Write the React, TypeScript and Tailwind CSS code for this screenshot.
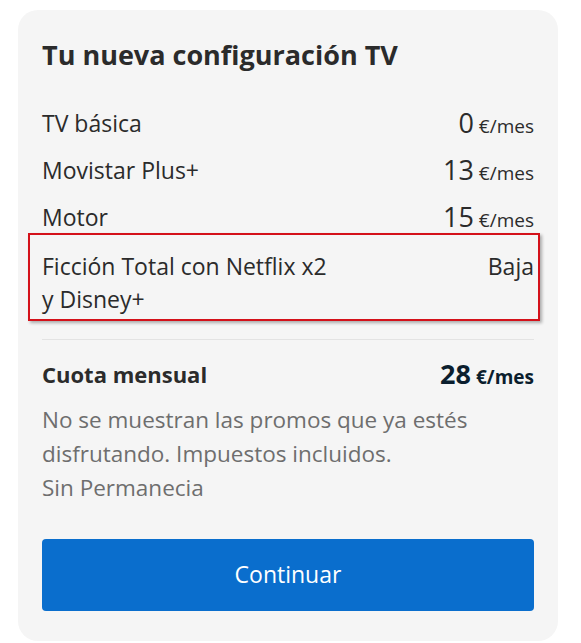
import React from 'react';

interface LineItem {
  name: React.ReactNode;
  price?: number;
  status?: string;
  highlight?: boolean;
}

const items: LineItem[] = [
  { name: 'TV básica', price: 0 },
  { name: 'Movistar Plus+', price: 13 },
  { name: 'Motor', price: 15 },
  {
    name: (
      <>
        Ficción Total con Netflix x2
        <br />y Disney+
      </>
    ),
    status: 'Baja',
    highlight: true,
  },
];

function Price({ value, bold }: { value: number; bold?: boolean }) {
  return (
    <span className={`whitespace-nowrap ${bold ? 'font-bold text-[#0b1e2e]' : 'text-[#2b2b2b]'}`}>
      <span className="text-[27px]">{value}</span>
      <span className="ml-[5px] text-[19px]">€/mes</span>
    </span>
  );
}

export default function App() {
  return (
    <div className="min-h-[643px] bg-white pl-[18px] pt-[10px] font-['Open_Sans',sans-serif]">
      <div className="w-[540px] rounded-[20px] bg-[#f5f5f5] px-[24px] pb-[30px] pt-[28px]">
        <h2 className="text-[27px] font-bold leading-[34px] text-[#2b2b2b]">
          Tu nueva configuración TV
        </h2>

        <div className="mt-[28px] flex flex-col">
          {items.map((item, i) => (
            <div
              key={i}
              className={
                item.highlight
                  ? 'ml-[-14px] mr-[-6px] mt-[-8px] flex items-start justify-between border-2 border-[#d4111a] pb-[3px] pl-[12px] pr-[4px] pt-[15px] shadow-[2px_2px_3px_rgba(0,0,0,0.3)]'
                  : 'flex h-[47px] items-center justify-between'
              }
            >
              <span className="text-[23px] leading-[33px] text-[#2b2b2b]">{item.name}</span>
              {item.price !== undefined ? (
                <Price value={item.price} />
              ) : (
                <span className="text-[23px] leading-[33px] text-[#2b2b2b]">{item.status}</span>
              )}
            </div>
          ))}
        </div>

        <div className="mt-[18px] border-t border-[#e3e3e3]" />

        <div className="mt-[14px] flex items-center justify-between">
          <span className="text-[22px] font-bold text-[#2b2b2b]">Cuota mensual</span>
          <Price value={28} bold />
        </div>

        <p className="mt-[8px] text-[22.5px] leading-[34px] text-[#6e6e6e]">
          No se muestran las promos que ya estés
          <br />
          disfrutando. Impuestos incluidos.
          <br />
          Sin Permanecia
        </p>

        <button className="mt-[34px] flex h-[72px] w-full items-center justify-center rounded-[4px] bg-[#0a6ecd] text-[23px] text-white">
          Continuar
        </button>
      </div>
    </div>
  );
}
